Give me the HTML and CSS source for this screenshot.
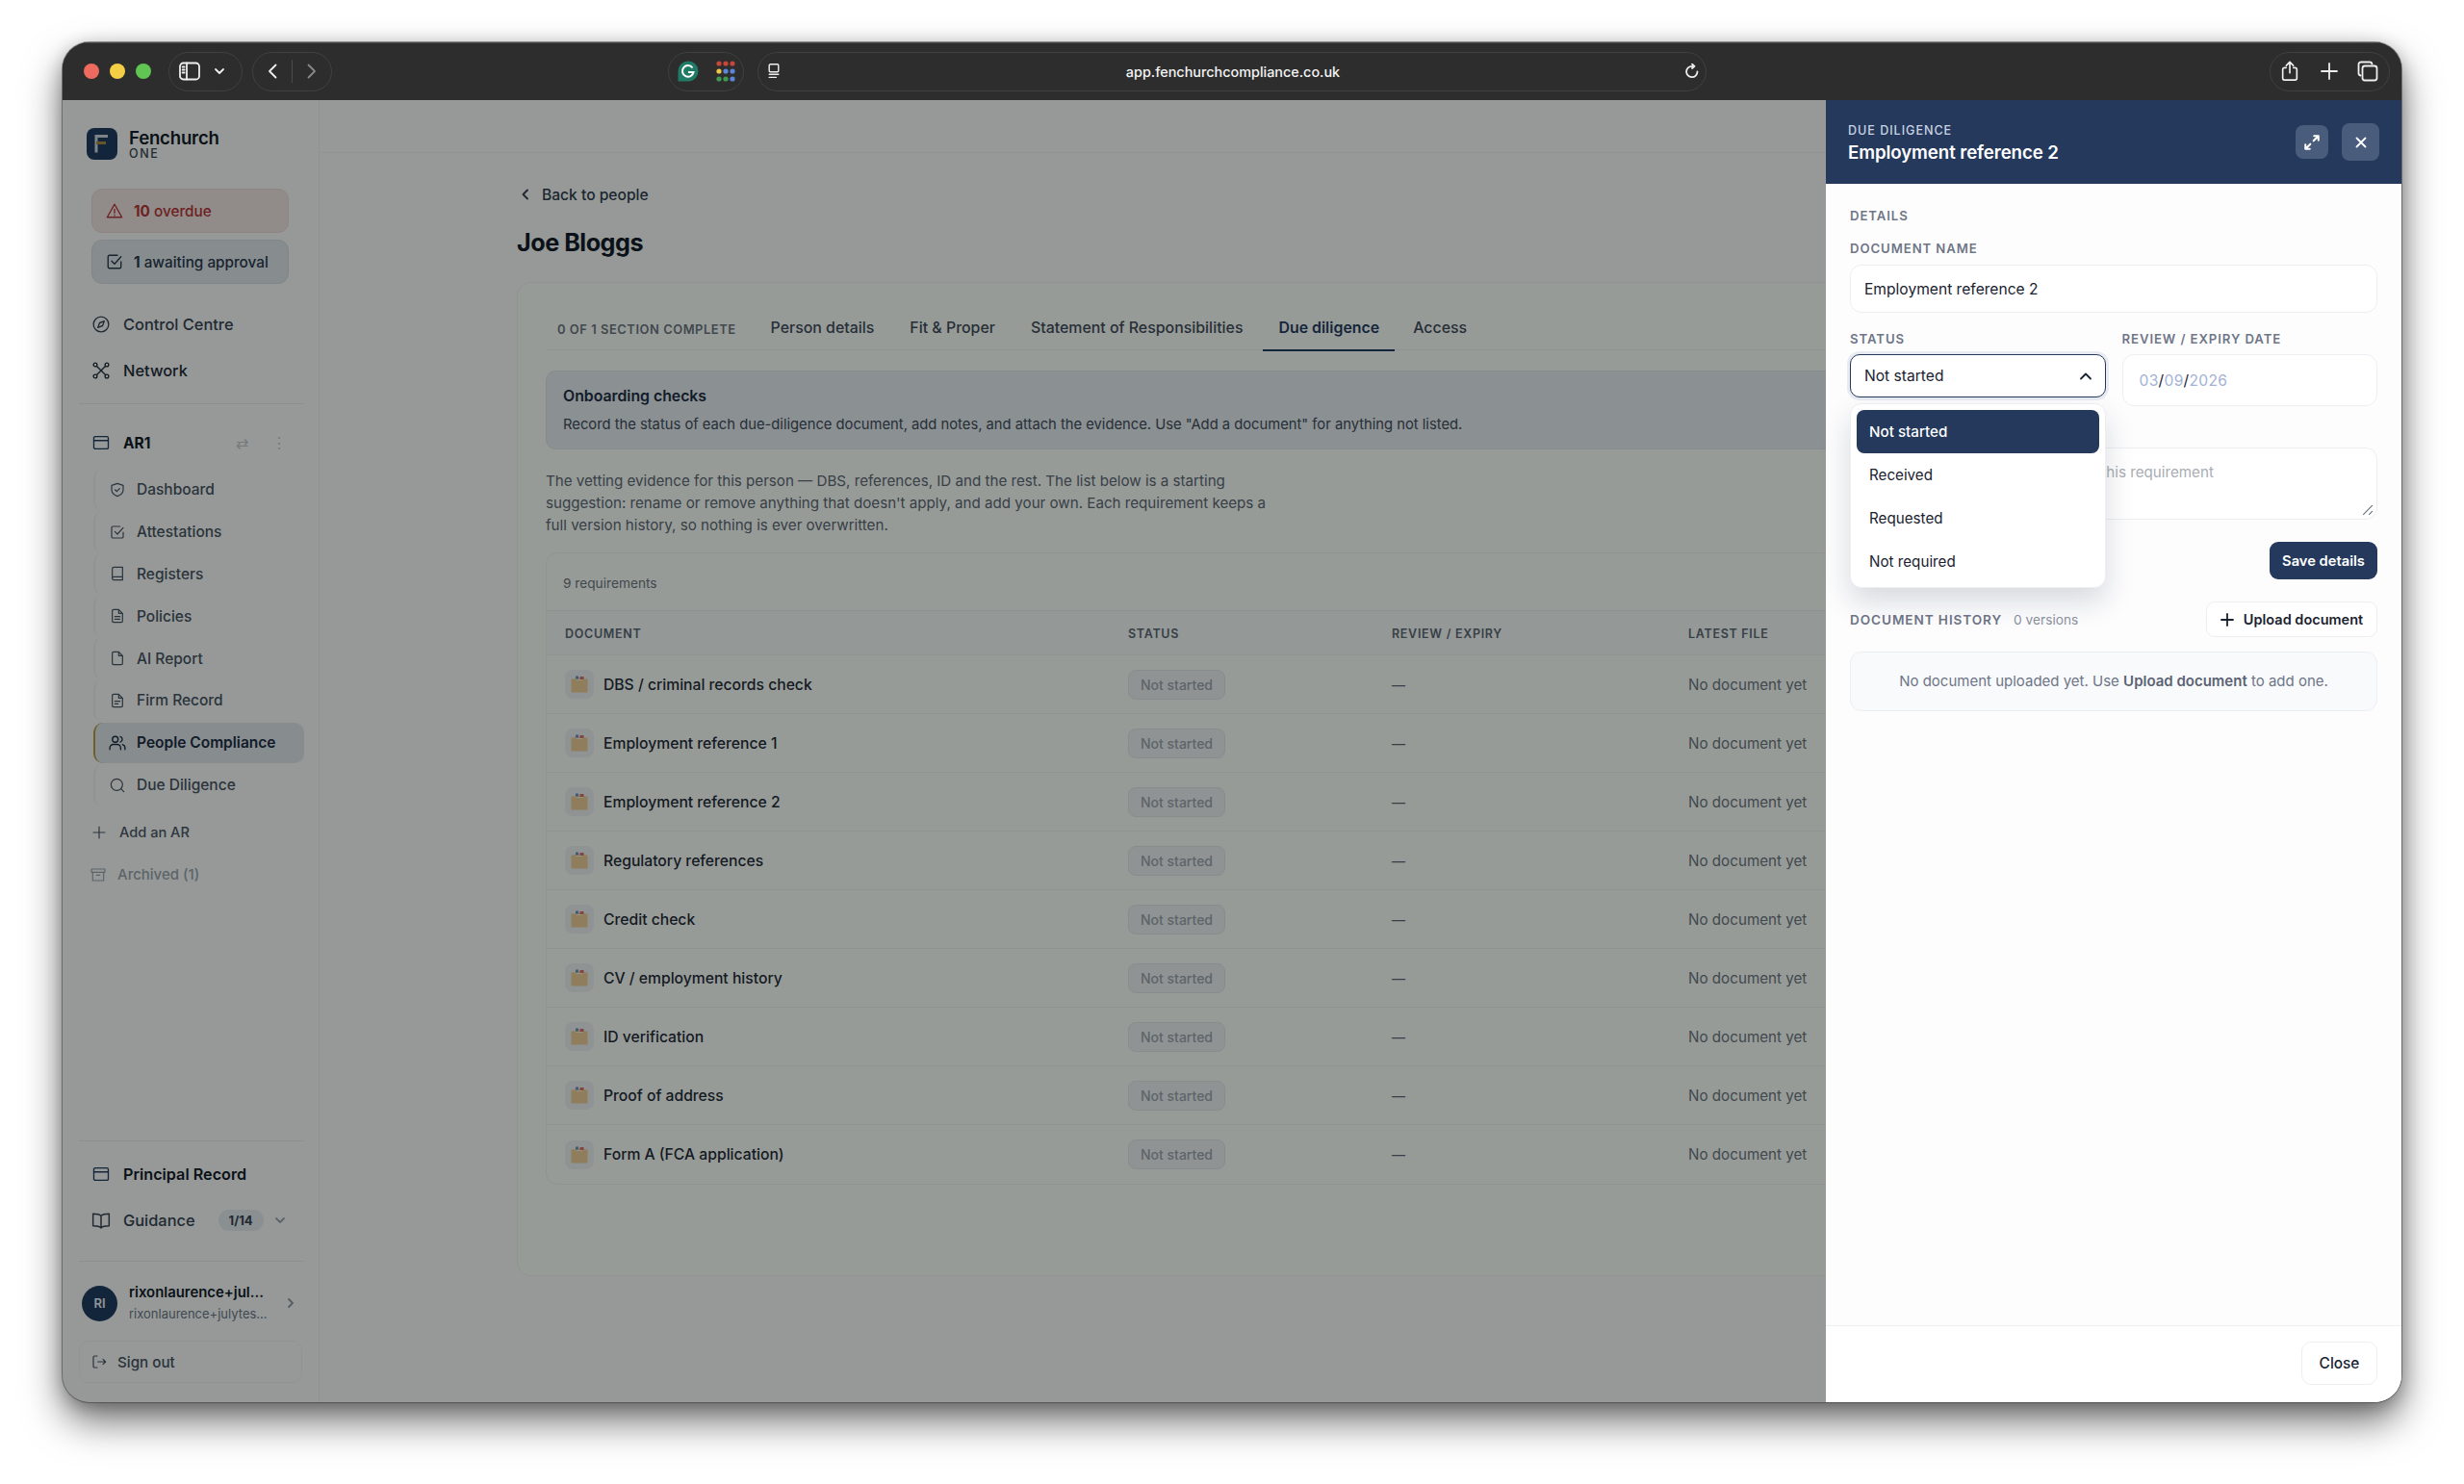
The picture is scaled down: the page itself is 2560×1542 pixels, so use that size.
FILE: index.html
```html
<!DOCTYPE html>
<html lang="en">
<head>
<meta charset="utf-8">
<title>Fenchurch One</title>
<link rel="stylesheet" href="styles.css">
</head>
<body>
<svg class="sprite" aria-hidden="true">
  <symbol id="bag" viewBox="0 0 18 18">
    <path d="M0.500 3.500h3.500l1 -1h8l1 1h3.500v14h-17z" fill="#eecb94"/>
    <rect x="5" y="0.500" width="3" height="3" fill="#6f8fc8"/>
    <rect x="9.500" y="1" width="4" height="3" fill="#d8706a"/>
    <rect x="5.500" y="4" width="7" height="1" fill="#f7efdf"/>
  </symbol>
</svg>
<div class="window">
  <header class="titlebar">
    <div class="lights"><i class="light red"></i><i class="light yellow"></i><i class="light green"></i></div>
    <div class="pill pill-side">
      <svg class="ic w22" viewBox="0 0 22 22"><rect x="1" y="2.500" width="20" height="17" rx="3.500"/><path d="M8 2.500v17M3.600 6.500h2M3.600 9.500h2M3.600 12.500h2"/></svg>
      <svg class="ic w12" viewBox="0 0 12 12"><path d="M2 4l4 4 4-4"/></svg>
    </div>
    <div class="pill pill-nav">
      <svg class="ic w18" viewBox="0 0 18 18"><path d="M11.500 2.500L5 9l6.500 6.500"/></svg>
      <i class="pill-div"></i>
      <svg class="ic w18 dim" viewBox="0 0 18 18"><path d="M6.500 2.500L13 9l-6.500 6.500"/></svg>
    </div>
    <div class="pill pill-ext">
      <svg class="w24" viewBox="0 0 24 24"><path d="M12 1.500a10.500 10.500 0 0 1 0 21H1.500V12A10.500 10.500 0 0 1 12 1.500z" fill="#1f7a66"/><path d="M16.500 8.500a5.800 5.800 0 1 0 1 4.500H12" fill="none" stroke="#fff" stroke-width="2"/></svg>
      <svg class="w24" viewBox="0 0 24 24">
        <circle cx="5" cy="4" r="2.600" fill="#c4473a"/><circle cx="12" cy="4" r="2.600" fill="#c4473a"/><circle cx="19" cy="4" r="2.600" fill="#c4473a"/>
        <circle cx="5" cy="12" r="2.600" fill="#eec643"/><circle cx="12" cy="12" r="2.600" fill="#5d86d8"/><circle cx="19" cy="12" r="2.600" fill="#5d86d8"/>
        <circle cx="5" cy="20" r="2.600" fill="#3f9a54"/><circle cx="12" cy="20" r="2.600" fill="#3f9a54"/><circle cx="19" cy="20" r="2.600" fill="#5d86d8"/>
      </svg>
    </div>
    <div class="pill urlbar">
      <svg class="ic w16" viewBox="0 0 16 20"><rect x="2" y="1" width="12" height="10" rx="1.500"/><path d="M2 14h12M2 18h9"/></svg>
      <span class="url">app.fenchurchcompliance.co.uk</span>
      <svg class="ic w16" viewBox="0 0 16 16"><path d="M13.500 8.500A5.700 5.700 0 1 1 8 2.800M8 0.500l2.500 2.300L8 5"/></svg>
    </div>
    <div class="pill pill-right">
      <svg class="ic w22" viewBox="0 0 22 24"><path d="M7 8H5a2 2 0 0 0-2 2v10a2 2 0 0 0 2 2h12a2 2 0 0 0 2-2V10a2 2 0 0 0-2-2h-2M11 14V2M7 5.500L11 1.500l4 4"/></svg>
      <svg class="ic w22" viewBox="0 0 22 22"><path d="M11 3v16M3 11h16"/></svg>
      <svg class="ic w22" viewBox="0 0 22 22"><path d="M3.500 15.500A2.500 2.500 0 0 1 1.500 13V4a2.500 2.500 0 0 1 2.500-2.500h9a2.500 2.500 0 0 1 2.500 2"/><rect x="5.500" y="5.500" width="15" height="15" rx="2.500"/></svg>
    </div>
  </header>

  <div class="stage">
    <aside class="sidebar">
      <div class="brand">
        <span class="logo"><svg viewBox="0 0 32 32" class="logo-svg"><path d="M10 25V8h12M10 15h7" fill="none" stroke="#cfd6df" stroke-width="3"/><path d="M10 15h10" stroke="#a98a3e" stroke-width="3"/></svg></span>
        <span class="brand-text"><b class="brand-name">Fenchurch</b><span class="brand-sub">ONE</span></span>
      </div>
      <div class="alert alert-red">
        <svg class="ic w18" viewBox="0 0 24 24"><path d="M12 3L1.800 21h20.400zM12 10v5M12 18v.5"/></svg>
        <span><b>10</b> overdue</span>
      </div>
      <div class="alert alert-slate">
        <svg class="ic w18" viewBox="0 0 24 24"><path d="M21 12v7a2 2 0 0 1-2 2H5a2 2 0 0 1-2-2V5a2 2 0 0 1 2-2h11M8 11l4 4 9-10"/></svg>
        <span><b>1</b> awaiting approval</span>
      </div>
      <nav class="topnav">
        <a class="navrow"><svg class="ic w18" viewBox="0 0 24 24"><circle cx="12" cy="12" r="10.500"/><path d="M16.500 7.500l-2.500 6.500-6.500 2.500 2.500-6.500z"/></svg>Control Centre</a>
        <a class="navrow navrow-strong"><svg class="ic w18" viewBox="0 0 24 24"><circle cx="4" cy="4" r="2.500"/><circle cx="20" cy="4" r="2.500"/><circle cx="4" cy="20" r="2.500"/><circle cx="20" cy="20" r="2.500"/><path d="M6 6l12 12M18 6L6 18"/></svg>Network</a>
      </nav>
      <div class="rule"></div>
      <div class="ar-head">
        <svg class="ic w18 navy" viewBox="0 0 24 24"><rect x="2" y="3.500" width="20" height="17" rx="2"/><path d="M2 9h20"/></svg>
        <b>AR1</b>
        <span class="ar-swap">⇄</span>
        <span class="ar-dots">⋮</span>
      </div>
      <ul class="subnav">
        <li class="subrow"><svg class="ic w16" viewBox="0 0 24 24"><path d="M12 2l9 3v7c0 5-4 8-9 10-5-2-9-5-9-10V5zM8.500 12l2.500 2.500 4.500-4.500"/></svg>Dashboard</li>
        <li class="subrow"><svg class="ic w16" viewBox="0 0 24 24"><path d="M21 12v7a2 2 0 0 1-2 2H5a2 2 0 0 1-2-2V5a2 2 0 0 1 2-2h11M8 11l4 4 9-10"/></svg>Attestations</li>
        <li class="subrow"><svg class="ic w16" viewBox="0 0 24 24"><path d="M4 19.500V4.500A2.500 2.500 0 0 1 6.500 2H20v20H6.500A2.500 2.500 0 0 1 4 19.500zA2.500 2.500 0 0 1 6.500 17H20"/></svg>Registers</li>
        <li class="subrow"><svg class="ic w16" viewBox="0 0 24 24"><path d="M14 2H6a2 2 0 0 0-2 2v16a2 2 0 0 0 2 2h12a2 2 0 0 0 2-2V8zM14 2v6h6M8 13h8M8 17h8"/></svg>Policies</li>
        <li class="subrow"><svg class="ic w16" viewBox="0 0 24 24"><path d="M14 2H6a2 2 0 0 0-2 2v16a2 2 0 0 0 2 2h12a2 2 0 0 0 2-2V8zM14 2v6h6"/></svg>AI Report</li>
        <li class="subrow"><svg class="ic w16" viewBox="0 0 24 24"><path d="M14 2H6a2 2 0 0 0-2 2v16a2 2 0 0 0 2 2h12a2 2 0 0 0 2-2V8zM14 2v6h6M8 13h8M8 17h5"/></svg>Firm Record</li>
        <li class="subrow subrow-active"><svg class="ic w18" viewBox="0 0 24 24"><circle cx="9" cy="7" r="4"/><path d="M1.500 21v-2a5 5 0 0 1 5-5h5a5 5 0 0 1 5 5v2M16 3.200a4 4 0 0 1 0 7.600M22.500 21v-2a5 5 0 0 0-3.500-4.800"/></svg>People Compliance</li>
        <li class="subrow"><svg class="ic w16" viewBox="0 0 24 24"><circle cx="11" cy="11" r="9"/><path d="M22 22l-4.500-4.500"/></svg>Due Diligence</li>
      </ul>
      <a class="addrow"><svg class="ic w14 thin" viewBox="0 0 14 14"><path d="M7 1v12M1 7h12"/></svg>Add an AR</a>
      <a class="archrow"><svg class="ic w16" viewBox="0 0 24 24"><rect x="1.500" y="3" width="21" height="5" rx="1"/><path d="M3.500 8v13h17V8M9.500 12.500h5"/></svg>Archived (1)</a>
      <div class="side-bottom">
        <div class="rule rule-flat"></div>
        <a class="navrow navrow-bold"><svg class="ic w18 navy" viewBox="0 0 24 24"><rect x="2" y="3.500" width="20" height="17" rx="2"/><path d="M2 9h20"/></svg>Principal Record</a>
        <a class="navrow navrow-guide"><svg class="ic w20" viewBox="0 0 24 24"><path d="M12 6.500C10 4.500 7 4 2 4v15c5 0 8 .500 10 2.500 2-2 5-2.500 10-2.500V4c-5 0-8 .500-10 2.500zM12 6.500v15"/></svg>Guidance<span class="badge">1/14</span><svg class="ic w12 chev" viewBox="0 0 12 12"><path d="M2 4l4 4 4-4"/></svg></a>
        <div class="rule rule-user"></div>
        <div class="user">
          <span class="avatar">RI</span>
          <span class="user-text"><b class="user-name">rixonlaurence+jul...</b><span class="user-mail">rixonlaurence+julytes...</span></span>
          <svg class="ic w12 user-chev" viewBox="0 0 12 12"><path d="M4 2l4 4-4 4"/></svg>
        </div>
        <a class="signout"><svg class="ic w16" viewBox="0 0 24 24"><path d="M9 21H5a2 2 0 0 1-2-2V5a2 2 0 0 1 2-2h4M10 12h12M18 8l4 4-4 4"/></svg>Sign out</a>
      </div>
    </aside>

    <main class="main">
      <div class="topstrip"></div>
      <div class="content">
        <a class="back"><svg class="ic w12" viewBox="0 0 12 12"><path d="M8 1.500L3.500 6 8 10.500"/></svg>Back to people</a>
        <h1 class="title">Joe Bloggs</h1>
        <section class="card">
          <div class="tabs">
            <span class="tabs-count">0 OF 1 SECTION COMPLETE</span>
            <a class="tab">Person details</a>
            <a class="tab">Fit &amp; Proper</a>
            <a class="tab">Statement of Responsibilities</a>
            <a class="tab tab-active">Due diligence</a>
            <a class="tab">Access</a>
          </div>
          <div class="callout">
            <b class="callout-title">Onboarding checks</b>
            <p class="callout-text">Record the status of each due-diligence document, add notes, and attach the evidence. Use "Add a document" for anything not listed.</p>
          </div>
          <p class="intro">The vetting evidence for this person — DBS, references, ID and the rest. The list below is a starting suggestion: rename or remove anything that doesn't apply, and add your own. Each requirement keeps a full version history, so nothing is ever overwritten.</p>
          <div class="table">
            <div class="table-top">9 requirements</div>
            <div class="trow thead"><span>DOCUMENT</span><span>STATUS</span><span>REVIEW / EXPIRY</span><span>LATEST FILE</span></div>
            <div class="trow"><span class="doc"><i class="doc-ic"><svg class="bag"><use href="#bag"/></svg></i>DBS / criminal records check</span><span><i class="status">Not started</i></span><span class="dash">—</span><span class="none">No document yet</span></div>
            <div class="trow"><span class="doc"><i class="doc-ic"><svg class="bag"><use href="#bag"/></svg></i>Employment reference 1</span><span><i class="status">Not started</i></span><span class="dash">—</span><span class="none">No document yet</span></div>
            <div class="trow"><span class="doc"><i class="doc-ic"><svg class="bag"><use href="#bag"/></svg></i>Employment reference 2</span><span><i class="status">Not started</i></span><span class="dash">—</span><span class="none">No document yet</span></div>
            <div class="trow"><span class="doc"><i class="doc-ic"><svg class="bag"><use href="#bag"/></svg></i>Regulatory references</span><span><i class="status">Not started</i></span><span class="dash">—</span><span class="none">No document yet</span></div>
            <div class="trow"><span class="doc"><i class="doc-ic"><svg class="bag"><use href="#bag"/></svg></i>Credit check</span><span><i class="status">Not started</i></span><span class="dash">—</span><span class="none">No document yet</span></div>
            <div class="trow"><span class="doc"><i class="doc-ic"><svg class="bag"><use href="#bag"/></svg></i>CV / employment history</span><span><i class="status">Not started</i></span><span class="dash">—</span><span class="none">No document yet</span></div>
            <div class="trow"><span class="doc"><i class="doc-ic"><svg class="bag"><use href="#bag"/></svg></i>ID verification</span><span><i class="status">Not started</i></span><span class="dash">—</span><span class="none">No document yet</span></div>
            <div class="trow"><span class="doc"><i class="doc-ic"><svg class="bag"><use href="#bag"/></svg></i>Proof of address</span><span><i class="status">Not started</i></span><span class="dash">—</span><span class="none">No document yet</span></div>
            <div class="trow trow-last"><span class="doc"><i class="doc-ic"><svg class="bag"><use href="#bag"/></svg></i>Form A (FCA application)</span><span><i class="status">Not started</i></span><span class="dash">—</span><span class="none">No document yet</span></div>
          </div>
        </section>
      </div>
    </main>

    <div class="dim-layer"></div>

    <aside class="panel">
      <div class="panel-head">
        <div class="panel-titles">
          <span class="panel-kicker">DUE DILIGENCE</span>
          <span class="panel-title">Employment reference 2</span>
        </div>
        <button class="hbtn hbtn-sm"><svg class="ic w18" viewBox="0 0 16 16"><path d="M9.500 6.500L14 2M10 2h4v4M6.500 9.500L2 14M2 10v4h4"/></svg></button>
        <button class="hbtn"><svg class="ic w14" viewBox="0 0 14 14"><path d="M2.500 2.500l9 9M11.500 2.500l-9 9"/></svg></button>
      </div>
      <div class="panel-body">
        <div class="label label-first">DETAILS</div>
        <div class="label label-gap">DOCUMENT NAME</div>
        <div class="input">Employment reference 2</div>
        <div class="two">
          <div class="field">
            <div class="label">STATUS</div>
            <div class="select">Not started<svg class="ic w14" viewBox="0 0 14 14"><path d="M2 9.500l5-5 5 5"/></svg></div>
            <ul class="menu">
              <li class="opt opt-on">Not started</li>
              <li class="opt">Received</li>
              <li class="opt">Requested</li>
              <li class="opt">Not required</li>
            </ul>
          </div>
          <div class="field">
            <div class="label">REVIEW / EXPIRY DATE</div>
            <div class="date"><em>03</em>/<em>09</em>/<em>2026</em></div>
          </div>
        </div>
        <div class="textarea">Add any notes that are relevant to this requirement
          <svg class="grip" viewBox="0 0 10 10"><path d="M9 1L1 9M9 6L6 9"/></svg>
        </div>
        <div class="save-row"><button class="btn-navy">Save details</button></div>
        <div class="hist-row">
          <span class="label label-hist">DOCUMENT HISTORY</span>
          <span class="versions">0 versions</span>
          <button class="btn-ghost"><svg class="ic w14" viewBox="0 0 14 14"><path d="M7 1v12M1 7h12"/></svg>Upload document</button>
        </div>
        <div class="empty">No document uploaded yet. Use <b>Upload document</b> to add one.</div>
      </div>
      <div class="panel-foot"><button class="btn-close">Close</button></div>
    </aside>
  </div>
</div>
</body>
</html>
```

FILE: styles.css
```css
* { box-sizing: border-box; }
html, body { margin: 0; height: 100%; }
body {
  padding: 44px 65px 85px;
  background: #fff;
  font-family: Inter, "Liberation Sans", sans-serif;
  color: #1a2230;
  overflow: hidden;
}
.sprite { display: none; }
a { display: block; }
ul { list-style: none; margin: 0; padding: 0; }
i, em { font-style: normal; }
button { font-family: inherit; border: 0; padding: 0; }

.ic { fill: none; stroke: currentColor; stroke-width: 1.8; stroke-linecap: round; stroke-linejoin: round; flex: none; }
.thin { stroke-width: 1.2; }
.w12 { width: 12px; height: 12px; }
.w14 { width: 14px; height: 14px; }
.w16 { width: 16px; height: 16px; }
.w18 { width: 18px; height: 18px; }
.w20 { width: 20px; height: 20px; }
.w22 { width: 22px; height: 22px; }
.w24 { width: 24px; height: 24px; flex: none; }

.window {
  height: 1413px;
  border-radius: 28px;
  overflow: hidden;
  display: flex;
  flex-direction: column;
  box-shadow: 0 0 0 1px rgba(60,60,60,.55), 0 20px 40px rgba(0,0,0,.55), 0 4px 18px rgba(0,0,0,.25);
  background: #2d2d2d;
}

/* browser chrome */
.titlebar {
  height: 60px;
  flex: none;
  display: flex;
  align-items: center;
  background: #2d2d2d;
  color: #eee;
  padding-left: 22px;
  box-shadow: inset 0 1px 0 #4a4a4a;
}
.lights { display: flex; gap: 11px; margin-right: 18px; }
.light { width: 16px; height: 16px; border-radius: 50%; display: block; }
.red { background: #ec6a5e; }
.yellow { background: #f4cf45; }
.green { background: #61c554; }
.pill {
  height: 41px;
  border: 1px solid #414141;
  border-radius: 21px;
  display: flex;
  align-items: center;
  flex: none;
}
.pill-side { width: 77px; padding-left: 10px; gap: 14px; margin-right: 10px; }
.pill-nav { width: 83px; padding-left: 12px; gap: 10px; }
.pill-div { width: 1px; height: 24px; background: #4a4a4a; display: block; }
.dim { color: #888; }
.pill-ext { width: 79px; margin-left: 349px; padding-left: 8px; gap: 15px; }
.urlbar { width: 986px; margin-left: 14px; padding: 0 6px 0 8px; }
.url { flex: 1; text-align: center; font-size: 14.4px; font-weight: 500; color: #f4f4f4; }
.pill-right { width: 125px; margin-left: auto; margin-right: 12px; padding: 0 11px 0 9px; justify-content: space-between; }

/* stage */
.stage { flex: 1; display: flex; position: relative; min-height: 0; background: #f8fbfa; }
.dim-layer { position: absolute; inset: 0; background: rgba(2,8,6,.4); }

/* sidebar */
.sidebar {
  width: 267px;
  flex: none;
  border-right: 1px solid #eef1f1;
  display: flex;
  flex-direction: column;
  padding-top: 29px;
}
.brand { display: flex; align-items: center; margin-left: 25px; gap: 12px; height: 33px; }
.logo { width: 32px; height: 33px; background: #1f3a5f; border-radius: 8px; display: block; }
.logo-svg { width: 32px; height: 33px; display: block; }
.brand-text { display: flex; flex-direction: column; }
.brand-name { font-size: 18.6px; font-weight: 600; line-height: 21px; color: #111827; letter-spacing: -.2px; }
.brand-sub { font-size: 12.5px; line-height: 12px; font-weight: 500; letter-spacing: 1.6px; color: #3a4350; }
.alert {
  height: 46px;
  margin-left: 30px;
  width: 205px;
  border-radius: 11px;
  border: 1px solid;
  display: flex;
  align-items: center;
  gap: 11px;
  padding-left: 14px;
  font-size: 15.3px;
  font-weight: 500;
  flex: none;
}
.alert b { font-weight: 700; }
.alert-red { margin-top: 30px; background: #f0e3e3; border-color: #e9d8d8; color: #b53234; }
.alert-slate { margin-top: 7px; background: #e0e5ea; border-color: #d3d9df; color: #27364d; }
.topnav { margin-top: 18px; }
.navrow {
  height: 48px;
  display: flex;
  align-items: center;
  gap: 14px;
  padding-left: 31px;
  font-size: 16.4px;
  font-weight: 500;
  color: #364152;
}
.navrow-strong { color: #1f2937; }
.navrow-bold { font-weight: 600; color: #111827; font-size: 16.2px; }
.navrow-guide { padding-left: 30px; gap: 13px; }
.rule { height: 1px; background: #e6eaea; margin: 10px 15px 0 17px; flex: none; }
.ar-head {
  height: 40px;
  margin-top: 20px;
  padding-left: 31px;
  display: flex;
  align-items: center;
  font-size: 15.5px;
  color: #111827;
}
.ar-head b { margin-left: 14px; font-weight: 700; }
.navy { color: #1f3a5f; }
.ar-swap { margin-left: 89px; color: #c0c5cc; font-size: 16px; }
.ar-dots { margin-left: 24px; color: #c0c5cc; font-size: 16px; }
.subnav { margin: 7px 15px 0 32px; }
.subrow {
  height: 43.800px;
  display: flex;
  align-items: center;
  gap: 12px;
  padding-left: 15px;
  font-size: 15.5px;
  font-weight: 500;
  color: #475161;
  border-left: 2px solid #eef1f2;
  border-radius: 10px;
}
.subrow-active {
  background: #dfe4ea;
  color: #1b2a41;
  font-weight: 600;
  border-left-color: #b59a3c;
  gap: 11px;
  padding-left: 14px;
  height: 42px;
  margin: 1px 0;
}
.addrow, .archrow { display: flex; align-items: center; font-size: 14.6px; font-weight: 500; }
.addrow { height: 44px; margin-top: 5px; padding-left: 31px; gap: 14px; color: #4b5565; }
.archrow { height: 44px; padding-left: 29px; gap: 12px; color: #98a2ad; font-size: 15px; }
.side-bottom { margin-top: auto; padding-bottom: 20px; }
.rule-flat { margin-top: 0; margin-bottom: 10px; }
.badge {
  margin-left: 11px;
  width: 47px;
  height: 22px;
  background: #e4e9ee;
  border-radius: 11px;
  display: block;
  text-align: center;
  font-size: 13px;
  font-weight: 700;
  line-height: 22px;
  color: #364152;
}
.chev { margin-left: -2px; color: #98a2ad; }
.rule-user { margin-top: 18px; }
.user { display: flex; align-items: center; height: 44px; margin: 21px 0 0 20px; }
.avatar {
  width: 37px; height: 37px; border-radius: 50%;
  background: #1f3a5f; color: #f2f5f8;
  font-size: 13px; font-weight: 600;
  display: flex; align-items: center; justify-content: center;
  flex: none;
}
.user-text { margin-left: 12px; display: flex; flex-direction: column; width: 156px; white-space: nowrap; }
.user-name { font-size: 14.9px; line-height: 22px; font-weight: 600; color: #111827; }
.user-mail { font-size: 13px; line-height: 22px; color: #6b7585; }
.user-chev { color: #8b95a3; margin-left: 6px; }
.signout {
  margin: 17px 0 0 17px;
  width: 232px;
  height: 44px;
  border: 1px solid #eef0f1;
  border-radius: 10px;
  display: flex;
  align-items: center;
  gap: 11px;
  padding-left: 12px;
  font-size: 15.2px;
  font-weight: 500;
  color: #475161;
}

/* main */
.main { flex: 1; min-width: 0; }
.topstrip { height: 55px; border-bottom: 1px solid #eef1f1; }
.content { padding: 32px 205px 0; }
.back { display: flex; align-items: center; gap: 11px; font-size: 15.6px; font-weight: 500; color: #2f3b4d; height: 22px; padding-left: 3px; }
.title { margin: 22px 0 0; font-size: 25.2px; line-height: 34px; font-weight: 700; letter-spacing: -.5px; color: #111827; }
.card {
  margin-top: 24px;
  height: 1033px;
  border: 1px solid #eef1ee;
  border-radius: 14px;
  background: #fafdf9;
  padding: 26px 29px 0;
}
.tabs {
  height: 44px;
  display: flex;
  border-bottom: 1px solid #e9edec;
  padding-left: 12px;
  align-items: stretch;
}
.tabs-count { font-size: 12.9px; font-weight: 600; letter-spacing: .55px; color: #6b7480; align-self: center; margin-right: 36px; padding-top: 1px; white-space: nowrap; }
.tab { font-size: 15.9px; font-weight: 500; color: #3f4a5a; margin-right: 37px; line-height: 41px; white-space: nowrap; }
.tab-active { color: #1f3a5f; font-weight: 600; border-bottom: 2px solid #1f3a5f; height: 45px; padding: 0 16px; margin-left: -16px; margin-right: 19px; }
.callout {
  margin-top: 21px;
  height: 82px;
  border-radius: 10px;
  border: 1px solid #dde3ea;
  background: #e6ebf0;
  padding: 14px 17px 0;
}
.callout-title { display: block; font-size: 15.8px; line-height: 24px; font-weight: 600; color: #1b2a41; }
.callout-text { margin: 6px 0 0; font-size: 14.75px; line-height: 22px; color: #3f4a5a; }
.intro { margin: 21px 0 0; width: 756px; font-size: 15.15px; line-height: 23px; color: #5b6674; }
.table { margin-top: 17px; border: 1px solid #eef1ee; border-radius: 12px; }
.table-top { height: 60px; padding: 20px 0 0 17px; font-size: 13.7px; line-height: 22px; color: #6b7480; border-bottom: 1px solid #e9edec; }
.trow {
  display: grid;
  grid-template-columns: 585px 274px 308px 1fr;
  align-items: center;
  height: 61px;
  padding-left: 19px;
  border-bottom: 1px solid #edf0ef;
  font-size: 14px;
}
.trow-last { border-bottom: 0; }
.thead { height: 46px; padding-top: 2px; font-size: 12.5px; font-weight: 600; letter-spacing: .7px; color: #5b6674; background: #f6f9f8; }
.doc { display: flex; align-items: center; gap: 10px; font-size: 15.7px; font-weight: 500; color: #1f2937; }
.doc-ic { width: 30px; height: 30px; border-radius: 8px; background: #eef0f2; display: flex; align-items: center; justify-content: center; flex: none; }
.bag { width: 18px; height: 18px; display: block; }
.status {
  display: inline-flex;
  align-items: center;
  height: 31px;
  width: 101px;
  justify-content: center;
  border: 1px solid #e1e5e8;
  border-radius: 8px;
  background: #eef1f3;
  color: #9aa3ad;
  font-size: 14px;
  font-weight: 500;
}
.dash { color: #5b6674; }
.none { color: #6b7480; font-size: 15.2px; }

/* panel */
.panel {
  position: absolute;
  top: 0; right: 0; bottom: 0;
  width: 598px;
  background: #fdfdfe;
  display: flex;
  flex-direction: column;
}
.panel-head {
  height: 87px;
  flex: none;
  background: #24395c;
  padding: 0 23px;
  display: flex;
  align-items: center;
  gap: 14px;
  color: #fff;
}
.panel-titles { flex: 1; display: flex; flex-direction: column; padding-top: 4px; }
.panel-kicker { font-size: 12.6px; font-weight: 500; letter-spacing: .95px; color: #c9d3e2; line-height: 16px; }
.panel-title { font-size: 18.7px; font-weight: 600; line-height: 26px; letter-spacing: -.1px; margin-top: 2px; }
.hbtn {
  width: 39px; height: 39px;
  border-radius: 8px;
  background: #4a5c7c;
  color: #fff;
  display: flex; align-items: center; justify-content: center;
}
.hbtn-sm { width: 34px; height: 35px; }
.panel-body { flex: 1; padding: 26px 25px 0; }
.label { font-size: 13.2px; line-height: 14px; font-weight: 600; letter-spacing: .9px; color: #6f7687; white-space: nowrap; }
.label-gap { margin-top: 20px; }
.label-hist { font-size: 13.6px; }
.input {
  margin-top: 10px;
  height: 50px;
  border: 1px solid #eceef2;
  border-radius: 12px;
  background: #fff;
  padding-left: 14px;
  display: flex;
  align-items: center;
  font-size: 15.6px;
  color: #1a2230;
}
.two { margin-top: 20px; display: grid; grid-template-columns: 1fr 1fr; gap: 17px; }
.field { position: relative; }
.select {
  margin-top: 9px;
  height: 45px;
  border: 1.5px solid #24395c;
  border-radius: 10px;
  background: #fff;
  box-shadow: 0 0 0 3px #e9ebf2;
  padding: 0 13px 0 14px;
  display: flex;
  align-items: center;
  justify-content: space-between;
  font-size: 15.6px;
  color: #1a2230;
}
.menu {
  position: absolute;
  left: 0; right: 0; top: 74px;
  height: 192px;
  padding: 6px;
  border: 1px solid #eceef2;
  border-radius: 12px;
  background: #fff;
  box-shadow: 0 14px 30px rgba(20,30,50,.16);
  z-index: 2;
}
.opt { height: 45px; padding-left: 13px; display: flex; align-items: center; font-size: 15.2px; color: #1a2230; }
.opt-on { background: #24395c; color: #fff; font-weight: 500; border-radius: 8px; }
.date {
  margin-top: 9px;
  height: 54px;
  border: 1px solid #eceef2;
  border-radius: 12px;
  background: #fff;
  padding-left: 17px;
  display: flex;
  align-items: center;
  font-size: 15.6px;
  color: #1a2230;
  letter-spacing: .3px;
}
.date em { color: #a3b2d6; }
.textarea {
  position: relative;
  margin-top: 43px;
  height: 75px;
  border: 1px solid #eceef2;
  border-radius: 12px;
  background: #fff;
  padding: 14px 0 0 14px;
  font-size: 15.2px;
  line-height: 22px;
  color: #a9adb5;
}
.grip { position: absolute; right: 3px; bottom: 3px; width: 12px; height: 12px; fill: none; stroke: #6b7280; stroke-width: 1; }
.save-row { margin-top: 23px; display: flex; justify-content: flex-end; }
.btn-navy { width: 112px; height: 39px; border-radius: 9px; background: #24395c; color: #fff; font-size: 14.7px; font-weight: 600; }
.hist-row { margin-top: 23px; display: flex; align-items: center; height: 37px; }
.versions { margin-left: 12px; font-size: 13.7px; color: #8b92a0; }
.btn-ghost {
  margin-left: auto;
  width: 178px; height: 37px;
  border: 1px solid #eceef2;
  border-radius: 9px;
  background: #fff;
  color: #1a2230;
  font-size: 14.500px;
  font-weight: 600;
  display: flex; align-items: center; justify-content: center; gap: 10px;
}
.empty {
  margin-top: 15px;
  height: 62px;
  border: 1px solid #eceef2;
  border-radius: 12px;
  background: #f8fafc;
  text-align: center;
  line-height: 60px;
  font-size: 15px;
  color: #6f7687;
}
.empty b { font-weight: 600; color: #5a6273; }
.panel-foot {
  height: 80px;
  flex: none;
  border-top: 1px solid #eceef2;
  display: flex;
  justify-content: flex-end;
  padding: 16px 25px 0;
  background: #fff;
}
.btn-close { width: 79px; height: 45px; border: 1px solid #eceef2; border-radius: 10px; background: #fff; color: #1a2230; font-size: 15.4px; font-weight: 500; }
```
